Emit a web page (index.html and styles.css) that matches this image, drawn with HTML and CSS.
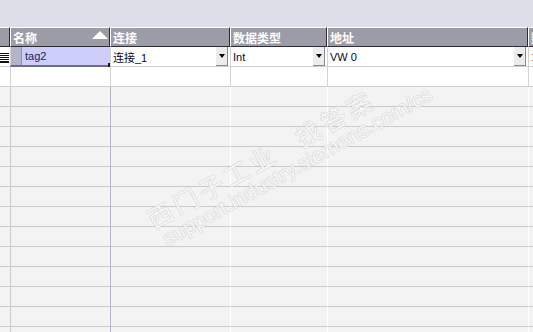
FILE: index.html
```html
<!DOCTYPE html>
<html lang="zh">
<head>
    <meta charset="UTF-8">
    <meta name="viewport" content="width=device-width, initial-scale=1.0">
    <title>变量表</title>
    <link rel="stylesheet" href="styles.css">
</head>
<body>
    <div class="topband"></div>
    <div class="grid">
        <div class="row head">
            <div class="c rh"></div>
            <div class="c name">名称<span class="sort"></span></div>
            <div class="c conn">连接</div>
            <div class="c dtype">数据类型</div>
            <div class="c addr">地址</div>
            <div class="c last">数组</div>
        </div>
        <div class="row data">
            <div class="c rh"><span class="rowicon"></span></div>
            <div class="c name">
                <span class="selgrip"></span>
                <span class="selval">tag2</span>
                <span class="handle"></span>
            </div>
            <div class="c conn"><span class="val">连接_1</span><span class="drop"></span></div>
            <div class="c dtype"><span class="val">Int</span><span class="drop"></span></div>
            <div class="c addr"><span class="val">VW 0</span><span class="drop"></span></div>
            <div class="c last"><span class="val num">1</span></div>
        </div>
        <div class="row blank">
            <div class="c rh"></div>
            <div class="c name"></div>
            <div class="c conn"></div>
            <div class="c dtype"></div>
            <div class="c addr"></div>
            <div class="c last"></div>
        </div>
        <div class="row empty"><div class="c rh"></div><div class="c name"></div><div class="c conn"></div><div class="c dtype"></div><div class="c addr"></div><div class="c last"></div></div>
        <div class="row empty"><div class="c rh"></div><div class="c name"></div><div class="c conn"></div><div class="c dtype"></div><div class="c addr"></div><div class="c last"></div></div>
        <div class="row empty"><div class="c rh"></div><div class="c name"></div><div class="c conn"></div><div class="c dtype"></div><div class="c addr"></div><div class="c last"></div></div>
        <div class="row empty"><div class="c rh"></div><div class="c name"></div><div class="c conn"></div><div class="c dtype"></div><div class="c addr"></div><div class="c last"></div></div>
        <div class="row empty"><div class="c rh"></div><div class="c name"></div><div class="c conn"></div><div class="c dtype"></div><div class="c addr"></div><div class="c last"></div></div>
        <div class="row empty"><div class="c rh"></div><div class="c name"></div><div class="c conn"></div><div class="c dtype"></div><div class="c addr"></div><div class="c last"></div></div>
        <div class="row empty"><div class="c rh"></div><div class="c name"></div><div class="c conn"></div><div class="c dtype"></div><div class="c addr"></div><div class="c last"></div></div>
        <div class="row empty"><div class="c rh"></div><div class="c name"></div><div class="c conn"></div><div class="c dtype"></div><div class="c addr"></div><div class="c last"></div></div>
        <div class="row empty"><div class="c rh"></div><div class="c name"></div><div class="c conn"></div><div class="c dtype"></div><div class="c addr"></div><div class="c last"></div></div>
        <div class="row empty"><div class="c rh"></div><div class="c name"></div><div class="c conn"></div><div class="c dtype"></div><div class="c addr"></div><div class="c last"></div></div>
        <div class="row empty"><div class="c rh"></div><div class="c name"></div><div class="c conn"></div><div class="c dtype"></div><div class="c addr"></div><div class="c last"></div></div>
        <div class="row empty"><div class="c rh"></div><div class="c name"></div><div class="c conn"></div><div class="c dtype"></div><div class="c addr"></div><div class="c last"></div></div>
        <div class="row empty"><div class="c rh"></div><div class="c name"></div><div class="c conn"></div><div class="c dtype"></div><div class="c addr"></div><div class="c last"></div></div>
    </div>
    <div class="watermark">
        <div class="wm-cn">西门子工业<span class="wm-gap"></span>找答案</div>
        <div class="wm-en">support.industry.siemens.com/cs</div>
    </div>
</body>
</html>
```

FILE: styles.css
```css
body {
    margin: 0;
    width: 533px;
    height: 332px;
    overflow: hidden;
    background-color: #f3f3f3;
    font-family: "Liberation Sans", "Noto Sans CJK SC", sans-serif;
    font-size: 11px;
    position: relative;
}

.topband {
    height: 27px;
    background-color: #dedee9;
}

.row {
    display: flex;
    height: 20px;
}

.c {
    box-sizing: border-box;
    height: 20px;
    flex: none;
    position: relative;
    display: flex;
    align-items: center;
}

.rh { width: 10px; }
.name { width: 100px; }
.conn { width: 120px; }
.dtype { width: 97px; }
.addr { width: 201px; }
.last { flex: 1; }

/* header */
.head .c {
    background-color: #9c9ca8;
    border-top: 1px solid #ffffff;
    border-left: 1px solid #ffffff;
    border-right: 1px solid #2c2c34;
    border-bottom: 1px solid #2c2c34;
    color: #ffffff;
    font-family: "Noto Sans CJK SC", sans-serif;
    font-weight: bold;
    font-size: 12px;
    padding-left: 2px;
    white-space: nowrap;
    overflow: hidden;
}

.head .rh {
    border-left: none;
    padding: 0;
}

.head .last {
    border-right: none;
}

.sort {
    margin-left: auto;
    margin-right: 1px;
    margin-bottom: 5px;
    width: 0;
    height: 0;
    border-left: 8px solid transparent;
    border-right: 8px solid transparent;
    border-bottom: 8px solid #ffffff;
}

/* data + body rows */
.data .c,
.blank .c {
    background-color: #ffffff;
    border-bottom: 1px solid #cfcfcf;
    border-left: 1px solid #d4d4d4;
}

.data .rh,
.blank .rh {
    border-left: none;
}

.val {
    padding-left: 2px;
    color: #0a0a24;
    white-space: nowrap;
}

.num {
    color: #8a6a00;
}

.rowicon {
    width: 9px;
    height: 9px;
    margin-top: 2px;
    background: repeating-linear-gradient(#111 0 1px, #fff 1px 2px);
    border-bottom: 1px solid #111;
}

.data .name {
    border-bottom: 2px solid #6e6e82;
    padding: 0;
    align-items: stretch;
}

.selgrip {
    width: 10px;
    background-color: #b3b3cc;
    border-right: 1px solid #8e8ea8;
}

.selval {
    flex: 1;
    background-color: #cdcdfa;
    color: #1c1c5c;
    padding-left: 3px;
    display: flex;
    align-items: center;
}

.handle {
    position: absolute;
    right: -2px;
    bottom: -2px;
    width: 4px;
    height: 4px;
    background-color: #1a1a1a;
}

.drop {
    margin-left: auto;
    margin-right: 2px;
    box-sizing: border-box;
    width: 12px;
    height: 19px;
    align-self: flex-start;
    background-color: #ececec;
    border-right: 1px solid #8a8a8a;
    border-bottom: 1px solid #8a8a8a;
    display: flex;
    align-items: center;
    justify-content: center;
}

.drop::after {
    content: "";
    width: 0;
    height: 0;
    border-left: 3px solid transparent;
    border-right: 3px solid transparent;
    border-top: 4px solid #000000;
}

.empty .c {
    background-color: #f3f3f3;
    border-bottom: 1px solid #cacaca;
    border-left: 1px solid #ffffff;
}

.empty .rh {
    border-left: none;
    border-right: 1px solid #f3f3f3;
}

.empty .name {
    border-left-color: #cacaca;
}

.empty .conn {
    border-left-color: #b4b4c6;
}

/* faint site watermark over the grid */
.watermark {
    position: absolute;
    left: 142px;
    top: 208px;
    transform-origin: 0 0;
    transform: rotate(-29deg);
    pointer-events: none;
    color: #f7f7f7;
    text-shadow: 0 0 1px #c0c0c0, 0 0 1px #c0c0c0;
    white-space: nowrap;
}

.wm-cn {
    font-family: "Noto Sans CJK SC", sans-serif;
    font-size: 25px;
    letter-spacing: 4px;
    line-height: 28px;
}

.wm-gap {
    display: inline-block;
    width: 24px;
}

.wm-en {
    font-family: "Liberation Sans", sans-serif;
    font-size: 21px;
    line-height: 22px;
    margin-left: 4px;
}
```
